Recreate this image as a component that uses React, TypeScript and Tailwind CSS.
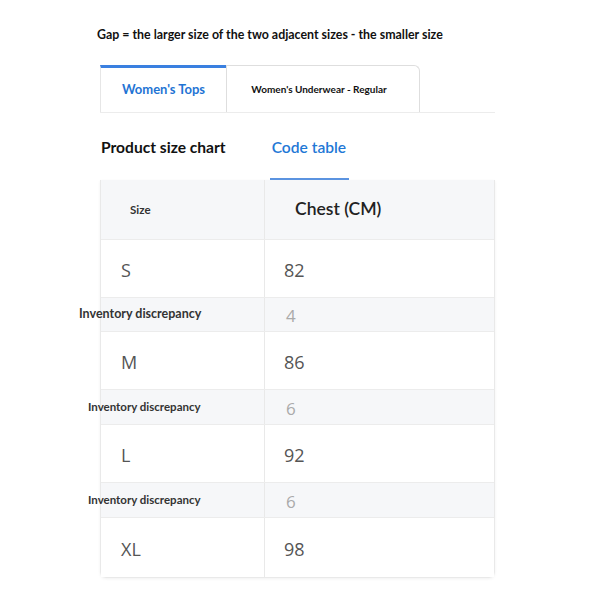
import React from "react";

const lato = "font-['Lato','Liberation_Sans',sans-serif]";
const open = "font-['Open_Sans','Liberation_Sans',sans-serif]";

type Row =
  | { kind: "size"; size: string; chest: string; h: string }
  | { kind: "gap"; value: string; h: string; shift: string; text: string };

const rows: Row[] = [
  { kind: "size", size: "S", chest: "82", h: "h-[58px]" },
  { kind: "gap", value: "4", h: "h-[34px]", shift: "-ml-[22px]", text: "text-[12.5px]" },
  { kind: "size", size: "M", chest: "86", h: "h-[58px]" },
  { kind: "gap", value: "6", h: "h-[35px]", shift: "-ml-[13px]", text: "text-[11.5px]" },
  { kind: "size", size: "L", chest: "92", h: "h-[58px]" },
  { kind: "gap", value: "6", h: "h-[35px]", shift: "-ml-[13px]", text: "text-[11.5px]" },
  { kind: "size", size: "XL", chest: "98", h: "h-[59px]" },
];

const SizeChart = () => {
  return (
    <div className="min-h-[600px] w-[600px] bg-white">
      <div className={`${lato} pl-[97px] pt-[27px] text-[12.4px] font-bold leading-4 text-[#111]`}>
        Gap = the larger size of the two adjacent sizes - the smaller size
      </div>

      {/* tabs */}
      <div className="ml-[100px] mt-[22px] flex w-[395px] border-b border-[#ececec]">
        <div
          className={`${lato} flex h-[47px] w-[126px] items-center justify-center border-l border-t-[3px] border-l-[#e6e6e6] border-t-[#3a80e0] text-[13px] font-bold text-[#1f74d4]`}
        >
          Women's Tops
        </div>
        <div
          className={`${lato} flex h-[47px] w-[194px] items-center justify-center rounded-tr-md border border-b-0 border-[#dedede] pr-[8px] text-[10px] font-bold text-[#111]`}
        >
          Women's Underwear - Regular
        </div>
      </div>

      {/* chart switch */}
      <div className={`${lato} ml-[101px] flex h-[67px] items-end text-[15.6px] leading-5`}>
        <div className="pb-[23px] font-bold text-[#111]">Product size chart</div>
        <div className="ml-[44px] w-[79px] border-b-2 border-[#5b93e0] pb-[21px] pl-[2px] font-semibold text-[#1f78d6]">
          Code table
        </div>
      </div>

      {/* table */}
      <div className="ml-[100px] w-[395px] rounded-b-md border border-t-0 border-[#e9e9e9] shadow-[0_1px_3px_rgba(0,0,0,0.06)]">
        <div className="flex h-[60px] border-b border-[#ececec] bg-[#f6f7f9]">
          <div className={`${lato} flex w-[164px] items-center border-r border-[#e9e9e9] pl-[29px] text-[11.5px] font-bold text-[#333]`}>
            Size
          </div>
          <div className={`${lato} flex flex-1 items-center pl-[30px] text-[17.5px] font-semibold text-[#222]`}>
            Chest (CM)
          </div>
        </div>
        {rows.map((r, i) =>
          r.kind === "size" ? (
            <div
              key={i}
              className={`flex ${r.h} ${i < rows.length - 1 ? "border-b border-[#ececec]" : ""} bg-white`}
            >
              <div className={`${open} flex w-[164px] items-center border-r border-[#e9e9e9] pl-[20px] pt-[3px] text-[18px] text-[#555]`}>
                {r.size}
              </div>
              <div className={`${open} flex flex-1 items-center pl-[19px] pt-[3px] text-[18px] text-[#555]`}>
                {r.chest}
              </div>
            </div>
          ) : (
            <div key={i} className={`flex ${r.h} border-b border-[#ececec] bg-[#f6f7f9]`}>
              <div className="flex w-[164px] items-center border-r border-[#e9e9e9]">
                <span className={`${lato} ${r.shift} ${r.text} whitespace-nowrap font-bold text-[#333]`}>
                  Inventory discrepancy
                </span>
              </div>
              <div className={`${open} flex flex-1 items-center pl-[21px] pt-[3px] text-[17px] text-[#aaa]`}>
                {r.value}
              </div>
            </div>
          )
        )}
      </div>
    </div>
  );
};

export default function App() {
  return <SizeChart />;
}
